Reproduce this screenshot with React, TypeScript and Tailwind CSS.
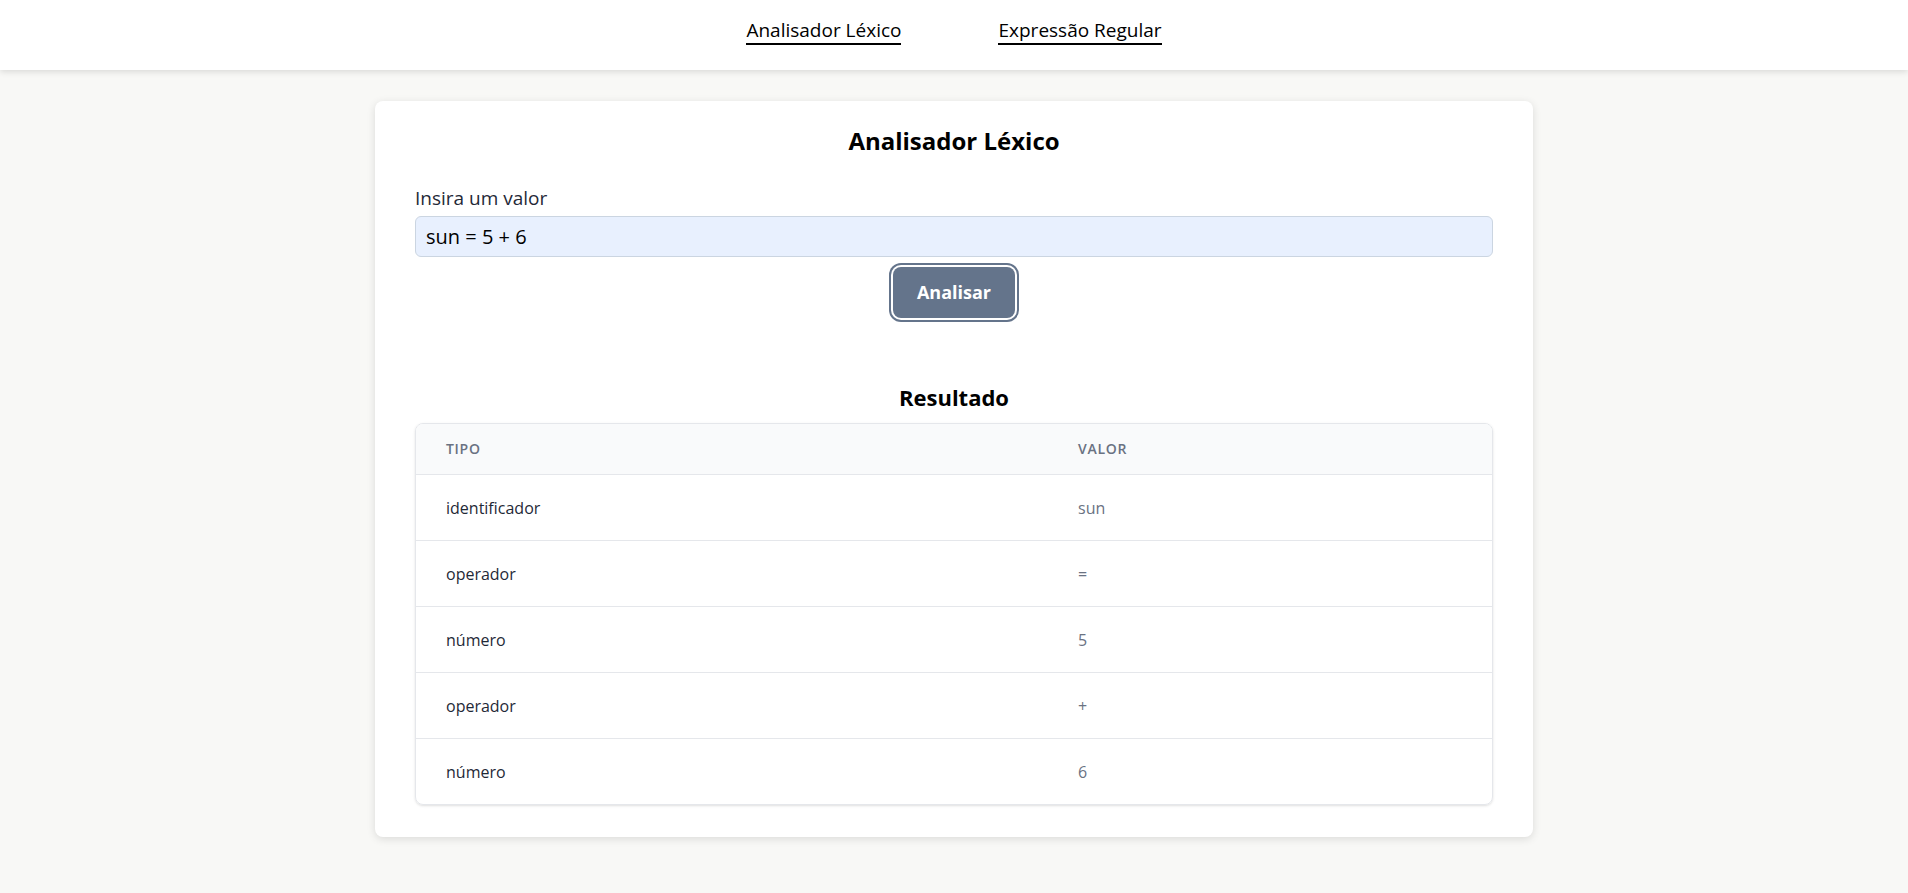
const tokens = [
  { tipo: "identificador", valor: "sun" },
  { tipo: "operador", valor: "=" },
  { tipo: "número", valor: "5" },
  { tipo: "operador", valor: "+" },
  { tipo: "número", valor: "6" },
];

export default function App() {
  return (
    <div className="min-h-[893px] bg-[#f8f8f6] font-['Open_Sans',_'Noto_Sans',_sans-serif] text-black">
      {/* Nav */}
      <header className="flex h-[70px] items-start justify-center gap-[97px] bg-white pt-[17px] shadow-[0_2px_6px_rgba(0,0,0,0.12)]">
        <a className="border-b-2 border-black text-[19px] leading-[26px] text-black">
          Analisador Léxico
        </a>
        <a className="border-b-2 border-black text-[19px] leading-[26px] text-black">
          Expressão Regular
        </a>
      </header>

      <main className="flex justify-center pt-[31px] pb-14">
        <div className="w-[1158px] rounded-lg bg-white px-10 pt-6 pb-8 shadow-[0_2px_8px_rgba(0,0,0,0.12)]">
          <h1 className="text-center text-2xl leading-8 font-bold">Analisador Léxico</h1>

          <label className="mt-[27px] mb-1 block text-[19px] leading-7 text-[#1f2937]">
            Insira um valor
          </label>
          <input
            readOnly
            value="sun = 5 + 6"
            className="block h-[41px] w-full rounded-md border border-[#cbd5e1] bg-[#e8f0fe] px-2.5 text-[20px] text-black outline-none"
          />

          <div className="mt-2.5 flex justify-center">
            <button className="rounded-lg bg-[#64748b] px-6 py-3 text-lg leading-[27px] font-bold text-white ring-2 ring-[#64748b] ring-offset-2">
              Analisar
            </button>
          </div>

          <h2 className="mt-[63px] mb-2.5 text-center text-[22px] leading-8 font-bold">Resultado</h2>

          <div className="overflow-hidden rounded-lg border border-gray-200 shadow-sm">
            <div className="grid grid-cols-[662px_1fr] bg-[#f9fafb] text-sm leading-5 font-semibold tracking-wider text-gray-500 uppercase">
              <div className="px-[30px] py-[15px]">Tipo</div>
              <div className="py-[15px]">Valor</div>
            </div>
            {tokens.map((t, i) => (
              <div key={i} className="grid grid-cols-[662px_1fr] border-t border-gray-200 text-base leading-6">
                <div className="px-[30px] py-[20.5px] text-[#1f2937]">{t.tipo}</div>
                <div className="py-[20.5px] text-gray-500">{t.valor}</div>
              </div>
            ))}
          </div>
        </div>
      </main>
    </div>
  );
}
